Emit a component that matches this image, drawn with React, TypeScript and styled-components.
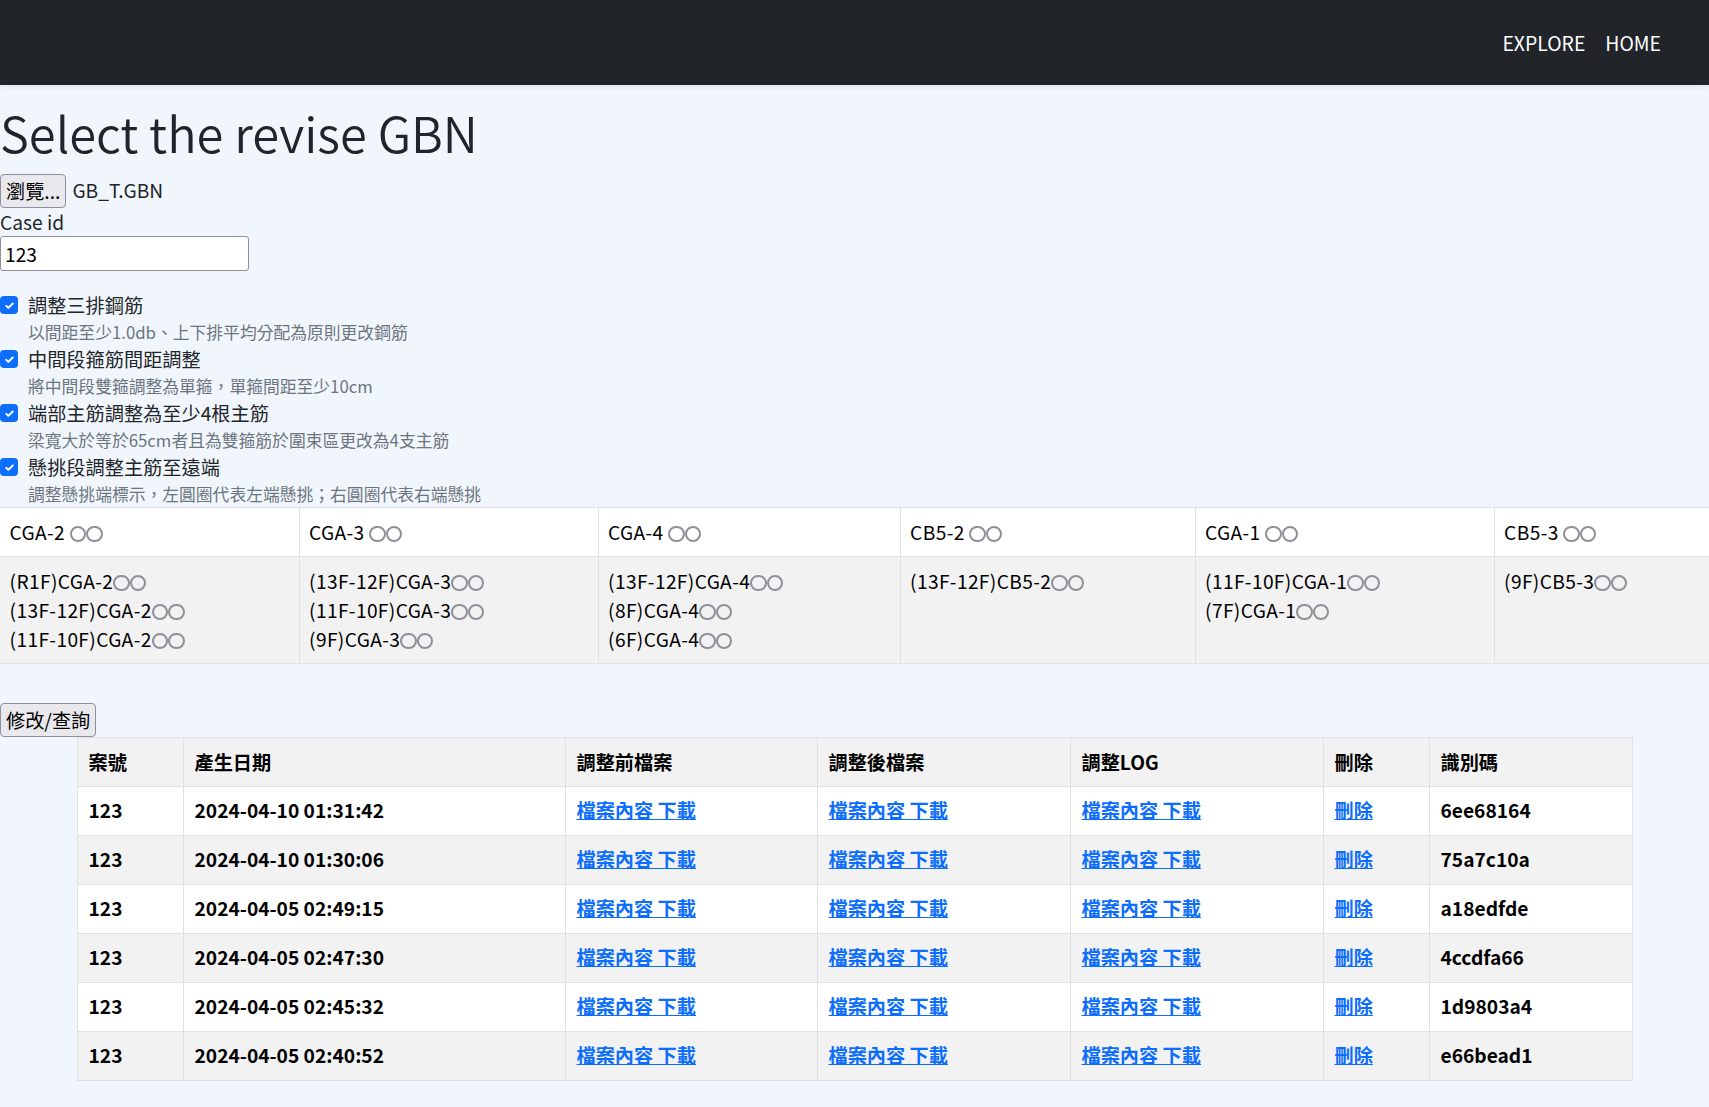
import React from "react";
import styled, { createGlobalStyle } from "styled-components";

const GlobalStyle = createGlobalStyle`
  html, body {
    margin: 0;
    padding: 0;
  }
  body {
    background: #f1f6fd;
    color: #212529;
    font-family: "Noto Sans CJK TC", "Noto Sans", sans-serif;
    font-size: 19.2px;
    line-height: 1.5;
    overflow-x: hidden;
  }
  * { box-sizing: border-box; }
`;

const NavBar = styled.nav`
  height: 85px;
  background: #212529;
  display: flex;
  align-items: center;
  justify-content: flex-end;
  gap: 20px;
  padding-right: 48px;
  box-shadow: 0 2px 6px rgba(0, 0, 0, 0.08);
`;

const NavLink = styled.a`
  color: #ffffff;
  font-size: 19.4px;
  text-decoration: none;
  line-height: 1;
`;

const Main = styled.main`
  display: flex;
  flex-direction: column;
`;

const Title = styled.h1`
  margin: 18px 0 12px;
  font-size: 48.8px;
  font-weight: 350;
  line-height: 1.2;
  color: #212529;
`;

const FileRow = styled.div`
  display: flex;
  align-items: center;
  gap: 6px;
  height: 34px;
`;

const NativeButton = styled.button`
  height: 34px;
  padding: 0 5px;
  font-family: inherit;
  font-size: 19.2px;
  color: #000;
  background: #e9e9ed;
  border: 1px solid #8f8f9d;
  border-radius: 4px;
  cursor: pointer;
`;

const FileName = styled.span`
  font-size: 19.2px;
`;

const FieldLabel = styled.label`
  display: block;
  line-height: 28.8px;
`;

const TextInput = styled.input`
  width: 249px;
  height: 35px;
  padding: 0 4px;
  font-family: inherit;
  font-size: 19.2px;
  color: #000;
  background: #fff;
  border: 1px solid #8f8f9d;
  border-radius: 3px;
`;

const CheckList = styled.div`
  margin-top: 20px;
  display: flex;
  flex-direction: column;
`;

const CheckItem = styled.div`
  display: grid;
  grid-template-columns: 28px 1fr;
`;

const CheckBox = styled.span`
  width: 18px;
  height: 18px;
  margin-top: 5px;
  border-radius: 4px;
  background: #0d6efd;
  display: flex;
  align-items: center;
  justify-content: center;
`;

const CheckText = styled.div`
  display: flex;
  flex-direction: column;
`;

const CheckLabel = styled.span`
  line-height: 28.8px;
`;

const CheckHint = styled.small`
  font-size: 16.8px;
  line-height: 25.2px;
  color: #6c757d;
`;

const GroupWrap = styled.div`
  overflow: hidden;
`;

const GroupTable = styled.table`
  border-collapse: collapse;
  table-layout: fixed;
  width: 1794px;
`;

const GroupRow = styled.tr<{ $shade?: boolean }>`
  background: ${(p) => (p.$shade ? "#f2f2f2" : "#ffffff")};
`;

const GroupCell = styled.td`
  padding: 9.6px 9.6px;
  line-height: 28.8px;
  vertical-align: top;
  border-top: 1px solid #dee2e6;
  border-bottom: 1px solid #dee2e6;
  border-right: 1px solid #dee2e6;
  font-weight: 400;
  letter-spacing: 0.35px;
  color: #000;
`;

const GroupLine = styled.div`
  white-space: nowrap;
`;

const Ring = styled.span`
  display: inline-block;
  width: 16.5px;
  height: 16.5px;
  border: 2px solid #918f98;
  border-radius: 50%;
  vertical-align: -2.5px;
`;

const ButtonRow = styled.div`
  margin-top: 39px;
  display: flex;
`;

const RecordsTable = styled.table`
  width: 91%;
  margin: 0 auto;
  border-collapse: collapse;
  table-layout: fixed;
  font-weight: 700;
  color: #000;
`;

const RecordRow = styled.tr<{ $shade?: boolean }>`
  background: ${(p) => (p.$shade ? "#f2f2f2" : "#ffffff")};
`;

const HeadCell = styled.th`
  text-align: left;
  font-weight: 700;
  padding: 9.6px 11px;
  line-height: 28.8px;
  border: 1px solid #dee2e6;
`;

const RecordCell = styled.td`
  padding: 9.6px 11px;
  line-height: 28.8px;
  border: 1px solid #dee2e6;
  white-space: nowrap;
`;

const TableLink = styled.a`
  color: #0d6efd;
  text-decoration: underline;
  cursor: pointer;
`;

const Check = () => (
  <CheckBox>
    <svg width="13" height="13" viewBox="0 0 20 20" fill="none">
      <path
        d="M5 10.5l3.2 3.2L15 7"
        stroke="#fff"
        strokeWidth="3"
        strokeLinecap="round"
        strokeLinejoin="round"
      />
    </svg>
  </CheckBox>
);

const Rings = () => (
  <>
    <Ring />
    <Ring />
  </>
);

const options = [
  { label: "調整三排鋼筋", hint: "以間距至少1.0db、上下排平均分配為原則更改鋼筋" },
  { label: "中間段箍筋間距調整", hint: "將中間段雙箍調整為單箍，單箍間距至少10cm" },
  { label: "端部主筋調整為至少4根主筋", hint: "梁寬大於等於65cm者且為雙箍筋於圍束區更改為4支主筋" },
  { label: "懸挑段調整主筋至遠端", hint: "調整懸挑端標示，左圓圈代表左端懸挑；右圓圈代表右端懸挑" },
];

const groups = [
  { head: "CGA-2", items: ["(R1F)CGA-2", "(13F-12F)CGA-2", "(11F-10F)CGA-2"] },
  { head: "CGA-3", items: ["(13F-12F)CGA-3", "(11F-10F)CGA-3", "(9F)CGA-3"] },
  { head: "CGA-4", items: ["(13F-12F)CGA-4", "(8F)CGA-4", "(6F)CGA-4"] },
  { head: "CB5-2", items: ["(13F-12F)CB5-2"] },
  { head: "CGA-1", items: ["(11F-10F)CGA-1", "(7F)CGA-1"] },
  { head: "CB5-3", items: ["(9F)CB5-3"] },
];
const groupWidths = [299, 299, 302, 295, 299, 300];

const records = [
  { id: "123", date: "2024-04-10 01:31:42", code: "6ee68164" },
  { id: "123", date: "2024-04-10 01:30:06", code: "75a7c10a" },
  { id: "123", date: "2024-04-05 02:49:15", code: "a18edfde" },
  { id: "123", date: "2024-04-05 02:47:30", code: "4ccdfa66" },
  { id: "123", date: "2024-04-05 02:45:32", code: "1d9803a4" },
  { id: "123", date: "2024-04-05 02:40:52", code: "e66bead1" },
];
const recordWidths = [106, 382, 252, 253, 253, 106, 203];
const headers = ["案號", "產生日期", "調整前檔案", "調整後檔案", "調整LOG", "刪除", "識別碼"];

const FileLinks = () => <TableLink>檔案內容 下載</TableLink>;

export default function App() {
  return (
    <>
      <GlobalStyle />
      <NavBar>
        <NavLink>EXPLORE</NavLink>
        <NavLink>HOME</NavLink>
      </NavBar>
      <Main>
        <Title>Select the revise GBN</Title>
        <FileRow>
          <NativeButton>瀏覽...</NativeButton>
          <FileName>GB_T.GBN</FileName>
        </FileRow>
        <FieldLabel>Case id</FieldLabel>
        <TextInput defaultValue="123" />
        <CheckList>
          {options.map((o) => (
            <CheckItem key={o.label}>
              <Check />
              <CheckText>
                <CheckLabel>{o.label}</CheckLabel>
                <CheckHint>{o.hint}</CheckHint>
              </CheckText>
            </CheckItem>
          ))}
        </CheckList>
        <GroupWrap>
          <GroupTable>
            <colgroup>
              {groupWidths.map((w, i) => (
                <col key={i} style={{ width: w }} />
              ))}
            </colgroup>
            <tbody>
              <GroupRow>
                {groups.map((g) => (
                  <GroupCell key={g.head}>
                    {g.head} <Rings />
                  </GroupCell>
                ))}
              </GroupRow>
              <GroupRow $shade>
                {groups.map((g) => (
                  <GroupCell key={g.head}>
                    {g.items.map((it) => (
                      <GroupLine key={it}>
                        {it}
                        <Rings />
                      </GroupLine>
                    ))}
                  </GroupCell>
                ))}
              </GroupRow>
            </tbody>
          </GroupTable>
        </GroupWrap>
        <ButtonRow>
          <NativeButton>修改/查詢</NativeButton>
        </ButtonRow>
        <RecordsTable>
          <colgroup>
            {recordWidths.map((w, i) => (
              <col key={i} style={{ width: w }} />
            ))}
          </colgroup>
          <tbody>
            <RecordRow $shade>
              {headers.map((h) => (
                <HeadCell key={h}>{h}</HeadCell>
              ))}
            </RecordRow>
            {records.map((r, i) => (
              <RecordRow key={r.code} $shade={i % 2 === 1}>
                <RecordCell>{r.id}</RecordCell>
                <RecordCell>{r.date}</RecordCell>
                <RecordCell><FileLinks /></RecordCell>
                <RecordCell><FileLinks /></RecordCell>
                <RecordCell><FileLinks /></RecordCell>
                <RecordCell><TableLink>刪除</TableLink></RecordCell>
                <RecordCell>{r.code}</RecordCell>
              </RecordRow>
            ))}
          </tbody>
        </RecordsTable>
      </Main>
    </>
  );
}
